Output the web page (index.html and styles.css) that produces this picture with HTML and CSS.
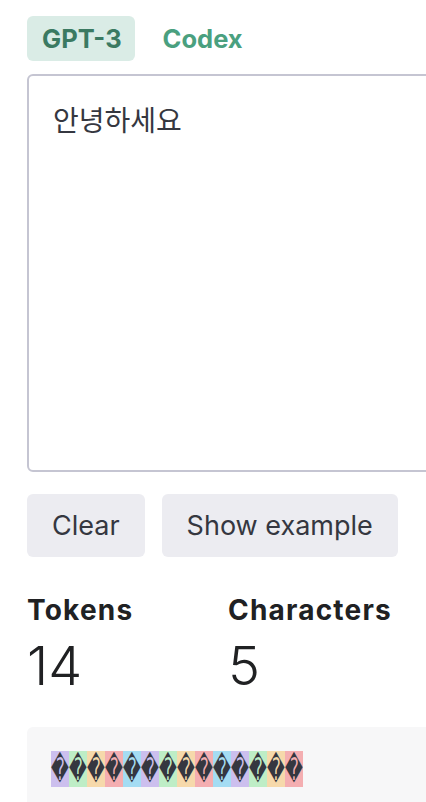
FILE: index.html
```html
<!DOCTYPE html>
<html lang="en">
<head>
<meta charset="utf-8">
<link rel="stylesheet" href="styles.css">
</head>
<body>
<main class="tool">
  <nav class="tabs">
    <span class="tab tab-active">GPT-3</span>
    <span class="tab">Codex</span>
  </nav>
  <div class="input">안녕하세요</div>
  <div class="actions">
    <button class="btn">Clear</button>
    <button class="btn">Show example</button>
  </div>
  <div class="stats">
    <div class="stat">
      <div class="stat-label">Tokens</div>
      <div class="stat-value">14</div>
    </div>
    <div class="stat">
      <div class="stat-label">Characters</div>
      <div class="stat-value">5</div>
    </div>
  </div>
  <div class="tokens"><span class="tk c1"><span class="g">&#xFFFD;</span></span><span class="tk c2"><span class="g">&#xFFFD;</span></span><span class="tk c3"><span class="g">&#xFFFD;</span></span><span class="tk c4"><span class="g">&#xFFFD;</span></span><span class="tk c5"><span class="g">&#xFFFD;</span></span><span class="tk c1"><span class="g">&#xFFFD;</span></span><span class="tk c2"><span class="g">&#xFFFD;</span></span><span class="tk c3"><span class="g">&#xFFFD;</span></span><span class="tk c4"><span class="g">&#xFFFD;</span></span><span class="tk c5"><span class="g">&#xFFFD;</span></span><span class="tk c1"><span class="g">&#xFFFD;</span></span><span class="tk c2"><span class="g">&#xFFFD;</span></span><span class="tk c3"><span class="g">&#xFFFD;</span></span><span class="tk c4"><span class="g">&#xFFFD;</span></span></div>
</main>
</body>
</html>
```

FILE: styles.css
```css
html, body {
  margin: 0;
  padding: 0;
  background: #ffffff;
  overflow: hidden;
}
body {
  font-family: Inter, "Noto Sans", "Noto Sans CJK KR", sans-serif;
  color: #353740;
}
.tool {
  width: 440px;
  padding: 16px 0 0 27px;
  display: flex;
  flex-direction: column;
}
.tabs {
  display: flex;
  height: 45px;
}
.tab {
  display: flex;
  align-items: center;
  padding: 0 13px 0 15px;
  font-size: 25.5px;
  font-weight: 700;
  color: #4aa07f;
  border-radius: 6px;
  margin-right: 13px;
}
.tab-active {
  background: #daece6;
  color: #3b7a62;
}
.input {
  margin-top: 13px;
  height: 398px;
  box-sizing: border-box;
  border: 2px solid #c5c5d2;
  border-radius: 6px;
  padding: 24px 24px;
  font-family: "Noto Sans CJK KR", sans-serif;
  font-size: 28px;
  line-height: 38px;
  color: #353740;
}
.actions {
  display: flex;
  gap: 17px;
  margin-top: 22px;
}
.btn {
  font-family: Inter, sans-serif;
  font-size: 27px;
  color: #353740;
  background: #ececf1;
  border: none;
  border-radius: 6px;
  height: 63px;
  padding: 0 25px;
}
.stats {
  display: flex;
  margin-top: 36px;
}
.stat {
  width: 201px;
}
.stat-label {
  font-size: 28px;
  font-weight: 700;
  letter-spacing: 1.2px;
  color: #202123;
  line-height: 34px;
}
.stat-value {
  font-size: 54px;
  font-weight: 350;
  color: #202123;
  line-height: 60px;
  margin-top: 9px;
}
.tokens {
  margin-top: 31px;
  background: #f7f7f8;
  border-radius: 6px;
  padding: 24px 24px 30px;
  font-family: "DejaVu Sans", sans-serif;
  font-size: 31px;
  line-height: 36px;
  color: #353740;
  white-space: nowrap;
  display: flex;
}
.tk {
  display: flex;
  justify-content: center;
  align-items: center;
  width: 18px;
  height: 36px;
}
.g {
  display: inline-block;
  transform: scaleX(0.56);
}
.c1 { background: rgba(107, 64, 216, 0.3); }
.c2 { background: rgba(104, 222, 122, 0.4); }
.c3 { background: rgba(244, 172, 54, 0.4); }
.c4 { background: rgba(239, 65, 70, 0.4); }
.c5 { background: rgba(39, 181, 234, 0.4); }
```
